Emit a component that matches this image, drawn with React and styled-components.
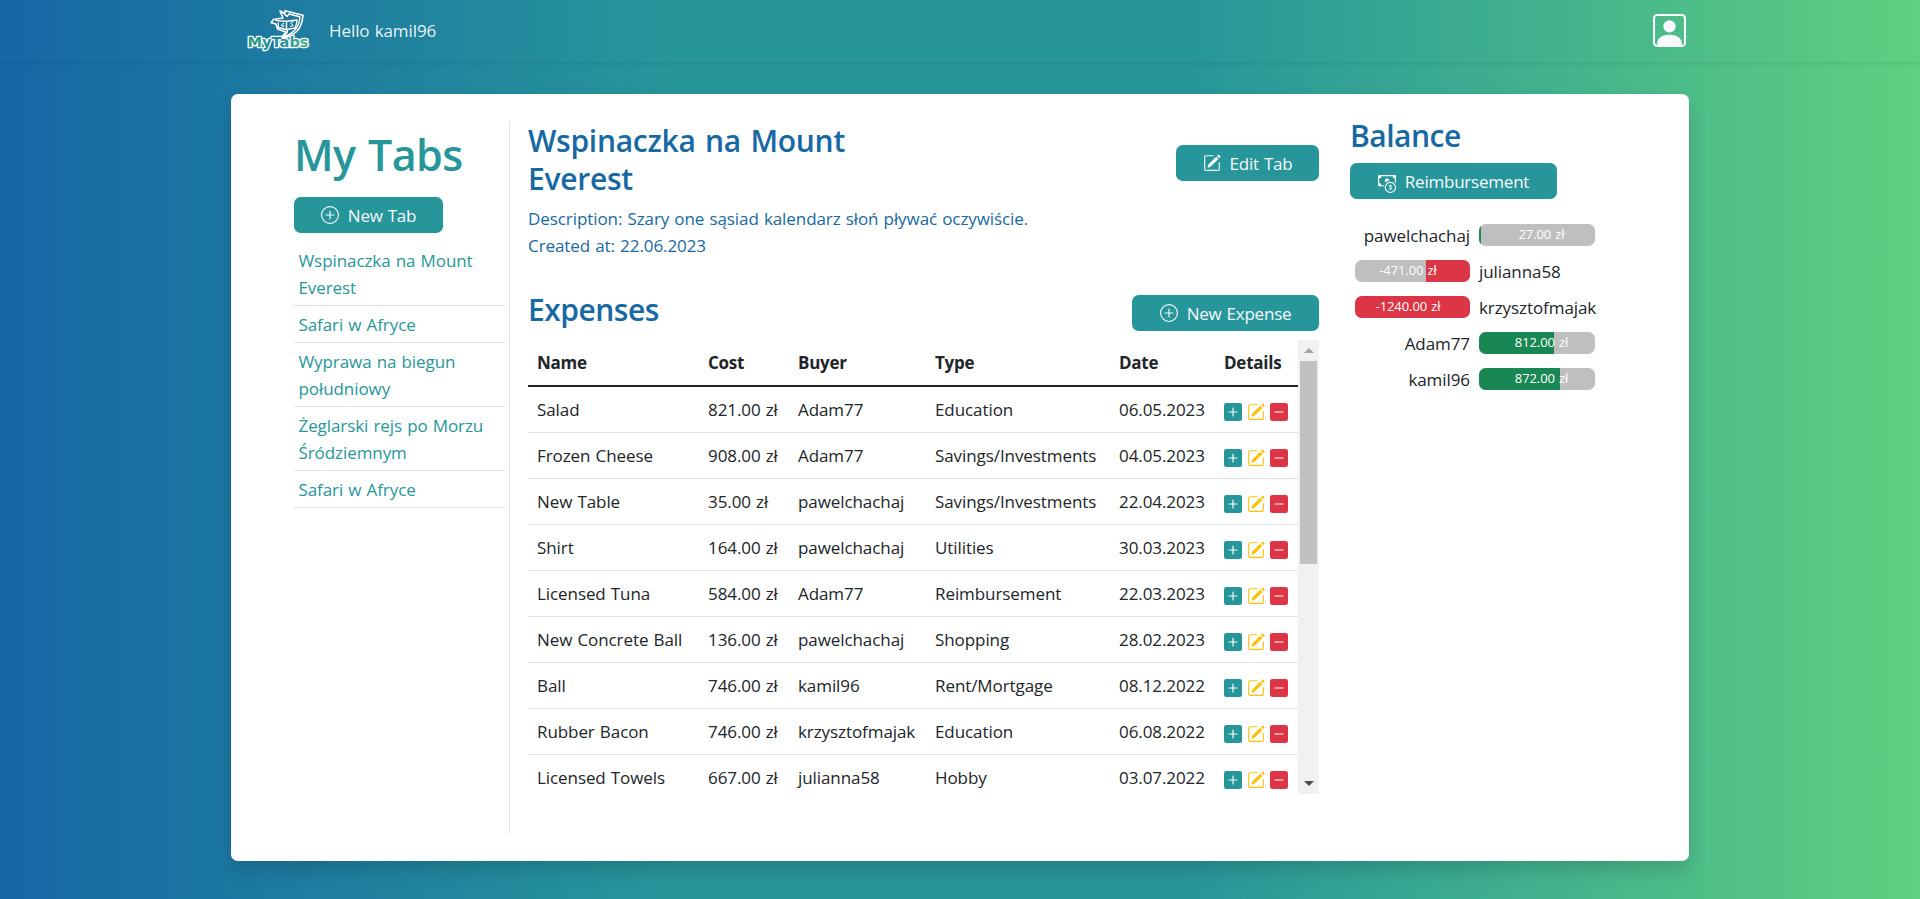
import React from "react";
import styled, { createGlobalStyle } from "styled-components";
import {
  BsPlusCircle,
  BsPencilSquare,
  BsPlusSquareFill,
  BsDashSquareFill,
  BsPersonSquare,
  BsCashCoin,
} from "react-icons/bs";

const teal = "#27969a";
const blue = "#1769a3";
const line = "#dee2e6";

const GlobalStyle = createGlobalStyle`
  *, *::before, *::after { box-sizing: border-box; }
  html { font-size: 18px; }
  body {
    margin: 0;
    overflow: hidden;
    font-family: "Open Sans", "Noto Sans", sans-serif;
    font-size: 17px;
    line-height: 27px;
    letter-spacing: -0.08px;
    word-spacing: 0.8px;
    color: #212529;
  }
  h1, h2, p, ul { margin: 0; padding: 0; }
`;

const Page = styled.div`
  display: flex;
  flex-direction: column;
  align-items: center;
  height: 899px;
  background: linear-gradient(90deg, #1667a5 0%, ${teal} 35%, ${teal} 62%, #5fcf80 100%);
`;

const Navbar = styled.header`
  display: flex;
  justify-content: center;
  width: 100%;
  height: 62px;
  flex: none;
  box-shadow: 0 2px 4px rgba(0, 0, 0, 0.075);
`;

const NavInner = styled.div`
  display: flex;
  align-items: center;
  width: 1452px;
  padding: 0 0 2px 11px;
`;

const Greeting = styled.span`
  margin-left: 18px;
  color: rgba(255, 255, 255, 0.92);
`;

const ProfileButton = styled.a`
  display: flex;
  margin-left: auto;
  color: #f8f9fa;
  svg { width: 33px; height: 33px; }
`;

const Card = styled.main`
  display: flex;
  width: 1458px;
  height: 767px;
  margin-top: 32px;
  padding: 27px 0 27px 63px;
  flex: none;
  background: #fff;
  border-radius: 6.75px;
  box-shadow: 0 9px 18px rgba(0, 0, 0, 0.15);
`;

const Sidebar = styled.aside`
  width: 216px;
  padding-right: 4px;
  border-right: 1px solid ${line};
`;

const SidebarTitle = styled.h1`
  margin: 7px 0 15px;
  font-size: 43px;
  font-weight: 600;
  line-height: 54px;
  letter-spacing: -0.6px;
  word-spacing: 2px;
  color: ${teal};
`;

const Button = styled.button`
  display: flex;
  align-items: center;
  justify-content: center;
  gap: 9px;
  flex: none;
  width: ${(p) => p.$width}px;
  height: 36px;
  padding: 0;
  border: 0;
  border-radius: 6.75px;
  background: ${teal};
  color: #f8f9fa;
  font: inherit;
  letter-spacing: -0.22px;
  word-spacing: 0.8px;
  white-space: nowrap;
  svg {
    width: 18px;
    height: 18px;
    flex: none;
    margin-top: ${(p) => p.$iconDrop || 0}px;
  }
`;

const TabList = styled.ul`
  margin-top: 9px;
  list-style: none;
`;

const TabItem = styled.li`
  padding: 4.5px;
  border-bottom: 1px solid ${line};
  color: ${teal};
`;

const Content = styled.section`
  display: flex;
  flex-direction: column;
  width: 791px;
  margin-left: 18px;
`;

const Heading = styled.h2`
  max-width: 340px;
  font-size: 30px;
  font-weight: 600;
  line-height: 38px;
  letter-spacing: -0.5px;
  color: ${blue};
`;

const TabHeader = styled.div`
  display: flex;
  align-items: flex-start;
  justify-content: space-between;
  height: 84px;
  padding-top: 1px;
  ${Heading} { letter-spacing: -0.28px; word-spacing: 2px; }
  ${Button} { margin-top: 23px; }
`;

const Meta = styled.p`
  color: ${blue};
`;

const ExpensesHeader = styled.div`
  display: flex;
  justify-content: space-between;
  margin-top: 32px;
  height: 49px;
  ${Button} { margin-top: 4px; }
`;

const TableFrame = styled.div`
  display: flex;
  height: 454px;
  overflow: hidden;
`;

const Table = styled.table`
  width: 770px;
  table-layout: fixed;
  border-collapse: separate;
  border-spacing: 0;
  align-self: flex-start;
`;

const Th = styled.th`
  width: ${(p) => p.$width}px;
  height: 47px;
  padding: 0 9px;
  border-bottom: 2px solid #212529;
  text-align: left;
  font-weight: 700;
  letter-spacing: -0.25px;
`;

const Td = styled.td`
  height: 46px;
  padding: 0 9px;
  border-bottom: 1px solid ${line};
  white-space: nowrap;
`;

const Actions = styled.div`
  display: flex;
  gap: 5px;
  margin-top: 4px;
  svg { width: 18px; height: 18px; flex: none; }
`;

const ActionIcon = styled.span`
  display: flex;
  color: ${(p) => p.$color};
`;

const Scrollbar = styled.div`
  display: flex;
  flex-direction: column;
  align-items: center;
  width: 21px;
  background: #f1f1f1;
`;

const ScrollArrow = styled.div`
  display: flex;
  align-items: center;
  justify-content: center;
  height: 21px;
  margin-top: ${(p) => (p.$down ? "auto" : 0)};
  &::before {
    content: "";
    border: 5px solid transparent;
    border-top: ${(p) => (p.$down ? "5px solid #505050" : "0")};
    border-bottom: ${(p) => (p.$down ? "0" : "5px solid #a3a3a3")};
  }
`;

const ScrollThumb = styled.div`
  width: 17px;
  height: 203px;
  background: #c1c1c1;
`;

const Balance = styled.section`
  width: 260px;
  margin-left: 31px;
`;

const BalanceTitle = styled(Heading)`
  margin: -4px 0 8px;
`;

const BalanceRow = styled.div`
  display: grid;
  grid-template-columns: 115px 116px;
  column-gap: 9px;
  align-items: center;
  height: 36px;
  padding-left: 5px;
`;

const BalanceList = styled.div`
  margin-top: 18px;
`;

const Person = styled.span`
  text-align: ${(p) => (p.$right ? "right" : "left")};
  white-space: nowrap;
`;

const Bar = styled.div`
  position: relative;
  display: flex;
  justify-content: ${(p) => (p.$negative ? "flex-end" : "flex-start")};
  height: 22px;
  border-radius: 6.75px;
  background: #bfbfbf;
  overflow: hidden;
`;

const BarFill = styled.div`
  background: ${(p) => (p.$negative ? "#dc3545" : "#198754")};
`;

const BarLabel = styled.span`
  position: absolute;
  inset: 0;
  padding: ${(p) => (p.$negative ? "0 9px 0 0" : "0 0 0 9px")};
  text-align: center;
  color: #fff;
  font-size: 13px;
  font-weight: 500;
  line-height: 21px;
`;

const tabs = [
  "Wspinaczka na Mount Everest",
  "Safari w Afryce",
  "Wyprawa na biegun południowy",
  "Żeglarski rejs po Morzu Śródziemnym",
  "Safari w Afryce",
];

const columns = [
  ["Name", 171],
  ["Cost", 90],
  ["Buyer", 137],
  ["Type", 184],
  ["Date", 105],
  ["Details", 83],
];

const expenses = [
  ["Salad", "821.00 zł", "Adam77", "Education", "06.05.2023"],
  ["Frozen Cheese", "908.00 zł", "Adam77", "Savings/Investments", "04.05.2023"],
  ["New Table", "35.00 zł", "pawelchachaj", "Savings/Investments", "22.04.2023"],
  ["Shirt", "164.00 zł", "pawelchachaj", "Utilities", "30.03.2023"],
  ["Licensed Tuna", "584.00 zł", "Adam77", "Reimbursement", "22.03.2023"],
  ["New Concrete Ball", "136.00 zł", "pawelchachaj", "Shopping", "28.02.2023"],
  ["Ball", "746.00 zł", "kamil96", "Rent/Mortgage", "08.12.2022"],
  ["Rubber Bacon", "746.00 zł", "krzysztofmajak", "Education", "06.08.2022"],
  ["Licensed Towels", "667.00 zł", "julianna58", "Hobby", "03.07.2022"],
];

const balances = [
  { name: "pawelchachaj", amount: 27, share: 2 },
  { name: "julianna58", amount: -471, share: 38 },
  { name: "krzysztofmajak", amount: -1240, share: 100 },
  { name: "Adam77", amount: 812, share: 65 },
  { name: "kamil96", amount: 872, share: 70 },
];

function Logo() {
  return (
    <svg width="66" height="46" viewBox="0 0 66 46">
      <defs>
        <linearGradient id="wordmark" x1="0" x2="1">
          <stop offset="0" stopColor="#2aa07f" />
          <stop offset="0.5" stopColor="#2389a0" />
          <stop offset="1" stopColor="#45b58a" />
        </linearGradient>
      </defs>
      <g strokeLinejoin="round" strokeLinecap="round">
        <path
          d="M35 4 40 6.5 40 3.8 58 8.3C57.5 17 53.5 24.5 47 28 43 30 38 30.8 36.5 30.3L41 25 32.5 22 31 17 26.2 15.8 28.3 12.5 38 11Z"
          fill="#1d7399"
          stroke="#fff"
          strokeWidth="1.6"
        />
        <path
          d="M31 13.6 41.5 14.2 41.5 22.5 50 21C51.5 18 52 15.5 52 13L41.5 14.2M36.5 4.5 42 9.5 44 7 54.8 9.8C54.8 18 50 25.5 40 29.5M33.3 16V20.5L41 22.5C44 23.5 42 27 38 29.5"
          fill="none"
          stroke="#fff"
          strokeWidth="1.4"
        />
        <path d="M38.7 16.2C36 16.4 36 19.8 38 19.8 40 19.6 39 17.6 37.2 18.2M48.2 14.8C45.5 14.8 45.2 16.6 47 17.2 49 18 48 19.8 45.4 19.2" fill="none" stroke="#fff" strokeWidth="1" />
      </g>
      <text
        x="2.5"
        y="40"
        textLength="61"
        lengthAdjust="spacingAndGlyphs"
        fontFamily="DejaVu Sans, sans-serif"
        fontWeight="700"
        fontSize="14.5"
        letterSpacing="0"
        fill="url(#wordmark)"
        stroke="#fff"
        strokeWidth="2.6"
        strokeLinejoin="round"
        paintOrder="stroke"
      >
        MyTabs
      </text>
    </svg>
  );
}

function ExpenseRow({ cells }) {
  return (
    <tr>
      {cells.map((cell, i) => (
        <Td key={i}>{cell}</Td>
      ))}
      <Td>
        <Actions>
          <ActionIcon $color={teal}><BsPlusSquareFill /></ActionIcon>
          <ActionIcon $color="#ffc107"><BsPencilSquare /></ActionIcon>
          <ActionIcon $color="#dc3545"><BsDashSquareFill /></ActionIcon>
        </Actions>
      </Td>
    </tr>
  );
}

function BalanceEntry({ name, amount, share }) {
  const negative = amount < 0;
  const person = <Person $right={!negative}>{name}</Person>;
  const bar = (
    <Bar $negative={negative}>
      <BarFill $negative={negative} style={{ width: `${share}%` }} />
      <BarLabel $negative={negative}>{amount.toFixed(2)} zł</BarLabel>
    </Bar>
  );
  return (
    <BalanceRow>
      {negative ? bar : person}
      {negative ? person : bar}
    </BalanceRow>
  );
}

export default function App() {
  return (
    <Page>
      <GlobalStyle />
      <Navbar>
        <NavInner>
          <Logo />
          <Greeting>Hello kamil96</Greeting>
          <ProfileButton><BsPersonSquare /></ProfileButton>
        </NavInner>
      </Navbar>
      <Card>
        <Sidebar>
          <SidebarTitle>My Tabs</SidebarTitle>
          <Button $width={149}><BsPlusCircle />New Tab</Button>
          <TabList>
            {tabs.map((tab, i) => (
              <TabItem key={i}>{tab}</TabItem>
            ))}
          </TabList>
        </Sidebar>
        <Content>
          <TabHeader>
            <Heading>Wspinaczka na Mount Everest</Heading>
            <Button $width={143}><BsPencilSquare />Edit Tab</Button>
          </TabHeader>
          <Meta>Description: Szary one sąsiad kalendarz słoń pływać oczywiście.</Meta>
          <Meta>Created at: 22.06.2023</Meta>
          <ExpensesHeader>
            <Heading>Expenses</Heading>
            <Button $width={187}><BsPlusCircle />New Expense</Button>
          </ExpensesHeader>
          <TableFrame>
            <Table>
              <thead>
                <tr>
                  {columns.map(([label, width]) => (
                    <Th key={label} $width={width}>{label}</Th>
                  ))}
                </tr>
              </thead>
              <tbody>
                {expenses.map((cells) => (
                  <ExpenseRow key={cells[0]} cells={cells} />
                ))}
              </tbody>
            </Table>
            <Scrollbar>
              <ScrollArrow />
              <ScrollThumb />
              <ScrollArrow $down />
            </Scrollbar>
          </TableFrame>
        </Content>
        <Balance>
          <BalanceTitle>Balance</BalanceTitle>
          <Button $width={207} $iconDrop={5}><BsCashCoin />Reimbursement</Button>
          <BalanceList>
            {balances.map((entry) => (
              <BalanceEntry key={entry.name} {...entry} />
            ))}
          </BalanceList>
        </Balance>
      </Card>
    </Page>
  );
}
